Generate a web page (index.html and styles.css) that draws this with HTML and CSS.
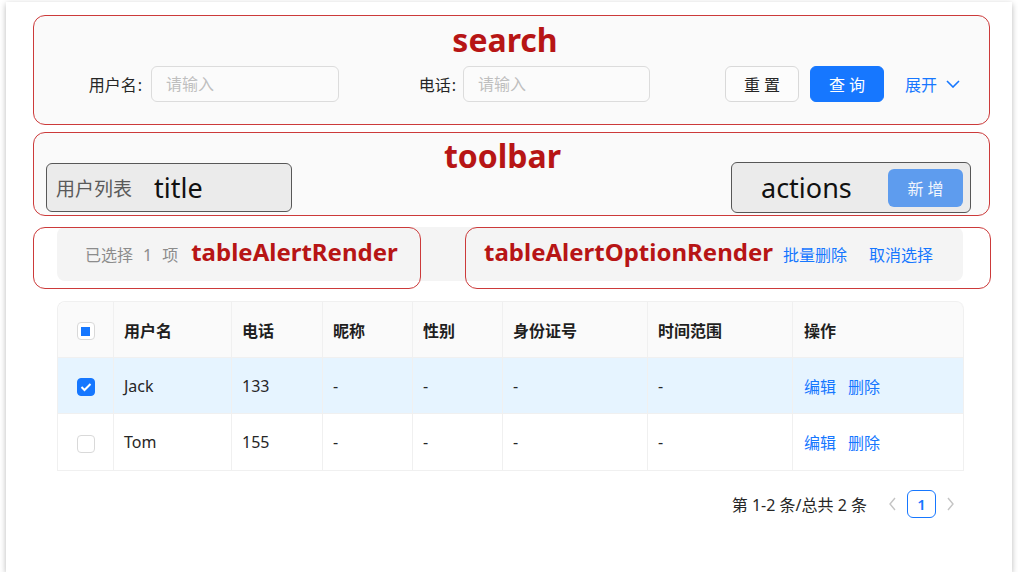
FILE: index.html
```html
<!DOCTYPE html>
<html lang="zh">
<head>
<meta charset="utf-8">
<title>ProTable</title>
<link rel="stylesheet" href="styles.css">
</head>
<body>
<div class="card">
  <section class="anno search">
    <div class="anno-label search-label">search</div>
    <div class="form-row">
      <label class="f-label l1">用户名<span class="colon">:</span></label>
      <div class="input i1">请输入</div>
      <label class="f-label l2">电话<span class="colon">:</span></label>
      <div class="input i2">请输入</div>
      <div class="btns">
        <button class="btn">重 置</button>
        <button class="btn primary">查 询</button>
        <a class="expand">展开<svg class="chev" width="14" height="8" viewBox="0 0 14 8"><path d="M1 1 L7 7 L13 1" fill="none" stroke="#1677ff" stroke-width="1.6"/></svg></a>
      </div>
    </div>
  </section>

  <section class="anno toolbar">
    <div class="anno-label toolbar-label">toolbar</div>
    <div class="tb-row">
      <div class="tb-box title-box"><span class="tb-title">用户列表</span><span class="big">title</span></div>
      <div class="tb-box actions-box"><span class="big">actions</span><button class="btn add">新 增</button></div>
    </div>
  </section>

  <div class="alert-wrap">
    <div class="alert">
      <div class="alert-left"><span class="sel">已选择<span class="num">1</span>项</span><span class="red-m">tableAlertRender</span></div>
      <div class="alert-right"><span class="red-m">tableAlertOptionRender</span><a class="link l-first">批量删除</a><a class="link l-second">取消选择</a></div>
    </div>
    <div class="anno-box ab-left"></div>
    <div class="anno-box ab-right"></div>
  </div>

  <table class="tbl">
    <colgroup>
      <col class="c0"><col class="c1"><col class="c2"><col class="c3"><col class="c4"><col class="c5"><col class="c6"><col class="c7">
    </colgroup>
    <thead>
      <tr>
        <th class="cb-cell"><span class="cb cb-ind"><span class="cb-dot"></span></span></th>
        <th>用户名</th><th>电话</th><th>昵称</th><th>性别</th><th>身份证号</th><th>时间范围</th><th>操作</th>
      </tr>
    </thead>
    <tbody>
      <tr class="sel-row">
        <td class="cb-cell"><span class="cb cb-on"><svg width="12" height="10" viewBox="0 0 12 10"><path d="M1.5 5 L4.5 8 L10.5 2" fill="none" stroke="#fff" stroke-width="2"/></svg></span></td>
        <td>Jack</td><td>133</td><td>-</td><td>-</td><td>-</td><td>-</td>
        <td><a class="link">编辑</a><a class="link ml">删除</a></td>
      </tr>
      <tr class="last-row">
        <td class="cb-cell"><span class="cb"></span></td>
        <td>Tom</td><td>155</td><td>-</td><td>-</td><td>-</td><td>-</td>
        <td><a class="link">编辑</a><a class="link ml">删除</a></td>
      </tr>
    </tbody>
  </table>

  <div class="pager">
    <span class="total">第 1-2 条/总共 2 条</span>
    <svg class="pg-arrow prev" width="9" height="14" viewBox="0 0 9 14"><path d="M7 1 L2 7 L7 13" fill="none" stroke="#c4c4c4" stroke-width="1.4"/></svg>
    <span class="page">1</span>
    <svg class="pg-arrow next" width="9" height="14" viewBox="0 0 9 14"><path d="M2 1 L7 7 L2 13" fill="none" stroke="#c4c4c4" stroke-width="1.4"/></svg>
  </div>
</div>
</body>
</html>
```

FILE: styles.css
```css
* { box-sizing: border-box; }

body {
  margin: 0;
  background: #ffffff;
  font-family: "Noto Sans", "Noto Sans CJK SC", sans-serif;
  color: #262626;
}

.card {
  margin: 2px 0 0 6px;
  width: 1006px;
  height: 570px;
  background: #ffffff;
  box-shadow: 0 2px 6px rgba(0, 0, 0, 0.28);
  padding: 13px 22px 0 27px;
}

.anno {
  position: relative;
  border: 1px solid #cc3a3a;
  border-radius: 12px;
  background: #fafafa;
}

.anno-label {
  font-weight: 700;
  font-size: 32px;
  line-height: 38px;
  color: #b71515;
  text-align: center;
}

/* search */
.search {
  height: 110px;
  padding-top: 5px;
}

.search-label {
  padding-right: 13px;
}

.form-row {
  display: flex;
  align-items: center;
  height: 36px;
  margin-top: 7px;
  padding-right: 29px;
  font-size: 16px;
}

.f-label {
  text-align: right;
  color: #262626;
}

.colon { margin-left: 1px; }

.l1 { width: 117px; padding-right: 9px; }
.l2 { width: 124px; padding-right: 7px; }

.input {
  height: 36px;
  border: 1px solid #dcdcdc;
  border-radius: 6px;
  background: #fbfbfb;
  color: #bfbfbf;
  padding-left: 14px;
  line-height: 34px;
  font-size: 16px;
}

.i1 { width: 188px; }
.i2 { width: 187px; }

.btns {
  margin-left: auto;
  display: flex;
  align-items: center;
}

.btn {
  font-family: "Noto Sans", "Noto Sans CJK SC", sans-serif;
  width: 74px;
  height: 36px;
  border: 1px solid #d9d9d9;
  border-radius: 6px;
  background: #fcfcfc;
  color: #262626;
  font-size: 16px;
  padding: 0;
}

.btn.primary {
  margin-left: 11px;
  background: #1677ff;
  border-color: #1677ff;
  color: #ffffff;
}

.expand {
  margin-left: 21px;
  color: #1677ff;
  font-size: 16px;
  display: flex;
  align-items: center;
}

.chev { margin-left: 9px; }

/* toolbar */
.toolbar {
  height: 84px;
  margin-top: 7px;
  padding: 29px 18px 0 12px;
}

.toolbar-label {
  position: absolute;
  top: 4px;
  left: 0;
  right: 0;
  padding-right: 18px;
}

.tb-row {
  display: flex;
  align-items: center;
  justify-content: space-between;
  height: 51px;
}

.tb-box {
  display: flex;
  align-items: center;
  background: #ebebeb;
  border: 1px solid #575757;
  border-radius: 6px;
}

.title-box {
  width: 246px;
  height: 49px;
  padding-left: 9px;
}

.tb-title {
  font-size: 19px;
  color: #5a5a5a;
  margin-right: 22px;
}

.big {
  font-size: 27px;
  color: #111111;
}

.actions-box {
  width: 240px;
  height: 51px;
  padding: 0 7px 0 29px;
}

.btn.add {
  margin-left: auto;
  width: 75px;
  height: 38px;
  border: none;
  background: #5e9cee;
  color: #f2f6fd;
}

/* alert */
.alert-wrap {
  position: relative;
  height: 62px;
  margin-top: 11px;
}

.alert {
  height: 54px;
  margin: 1px 27px 0 24px;
  background: #f4f4f4;
  border-radius: 8px;
  display: flex;
  align-items: center;
  justify-content: space-between;
  padding: 0 30px 0 28px;
  font-size: 16px;
}

.alert-left, .alert-right {
  display: flex;
  align-items: center;
}

.sel { color: #8c8c8c; }
.num { margin: 0 10px; }

.red-m {
  font-weight: 700;
  font-size: 24px;
  color: #b71515;
  margin-left: 13px;
  margin-top: -5px;
}

.alert-right .red-m { margin-left: 0; }

.link { color: #1677ff; }
.l-first { margin-left: 10px; }
.l-second { margin-left: 22px; }

.anno-box {
  position: absolute;
  top: 0;
  height: 62px;
  border: 1px solid #cc3a3a;
  border-radius: 12px;
}

.ab-left { left: 0; width: 388px; }
.ab-right { left: 432px; right: -1px; }

/* table */
.tbl {
  margin: 12px 0 0 24px;
  width: 906px;
  table-layout: fixed;
  border-collapse: separate;
  border-spacing: 0;
  font-size: 16px;
  border-left: 1px solid #f0f0f0;
  border-top: 1px solid #f0f0f0;
  border-radius: 8px 8px 0 0;
}

.c0 { width: 56px; }
.c1 { width: 118px; }
.c2 { width: 91px; }
.c3 { width: 90px; }
.c4 { width: 90px; }
.c5 { width: 145px; }
.c6 { width: 145px; }
.c7 { width: 171px; }

.tbl th, .tbl td {
  border-right: 1px solid #f0f0f0;
  border-bottom: 1px solid #f0f0f0;
  text-align: left;
  padding: 0 0 0 10px;
  height: 56px;
}

.tbl th {
  background: #fafafa;
  font-weight: 700;
  color: #1f1f1f;
}

.tbl thead th:first-child { border-top-left-radius: 8px; }
.tbl thead th:last-child { border-top-right-radius: 8px; }

.tbl td { color: #262626; }

.tbl tr.sel-row td { background: #e6f4ff; }
.tbl tr.last-row td { height: 57px; }

.tbl .cb-cell {
  padding: 0;
  text-align: center;
}

.cb {
  display: inline-flex;
  align-items: center;
  justify-content: center;
  width: 18px;
  height: 18px;
  border: 1px solid #d9d9d9;
  border-radius: 4px;
  background: #ffffff;
  vertical-align: middle;
}

.cb-dot {
  width: 9px;
  height: 9px;
  background: #1677ff;
}

.cb-on {
  background: #1677ff;
  border-color: #1677ff;
}

.ml { margin-left: 12px; }

.tbl td:last-child, .tbl th:last-child { padding-left: 11px; }

/* pager */
.pager {
  margin: 19px 35px 0 0;
  display: flex;
  justify-content: flex-end;
  align-items: center;
  font-size: 16px;
  color: #262626;
}

.pg-arrow.prev { margin-left: 21px; }

.page {
  margin: 0 10px;
  width: 29px;
  height: 28px;
  border: 1px solid #1677ff;
  border-radius: 6px;
  color: #1677ff;
  font-weight: 600;
  text-align: center;
  line-height: 26px;
  font-size: 15px;
}
```
